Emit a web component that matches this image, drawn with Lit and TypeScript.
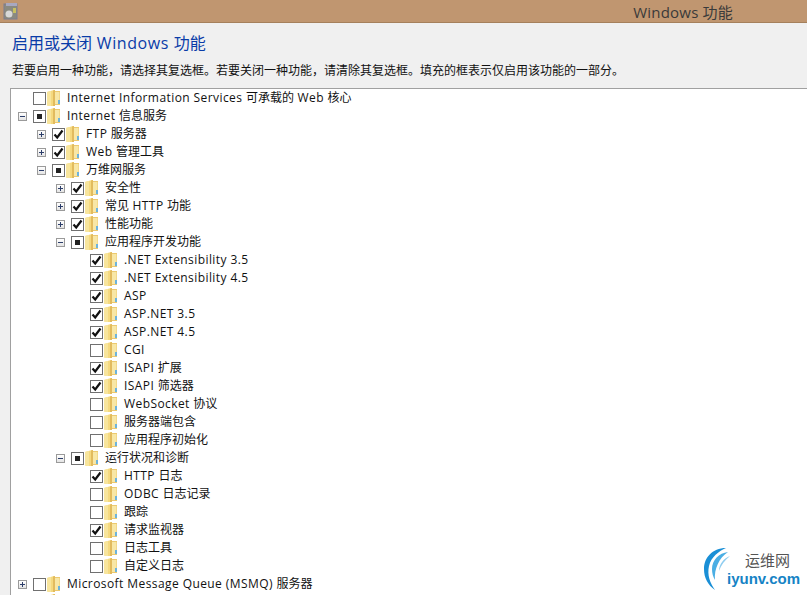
import { LitElement, html, css, svg } from "lit";
import { customElement } from "lit/decorators.js";

type Row = { l: number; t: string; c: "n" | "y" | "p"; e?: "+" | "-" };
const rows: Row[] = [
  { l: 0, t: "Internet Information Services 可承载的 Web 核心", c: "n" },
  { l: 0, t: "Internet 信息服务", c: "p", e: "-" },
  { l: 1, t: "FTP 服务器", c: "y", e: "+" },
  { l: 1, t: "Web 管理工具", c: "y", e: "+" },
  { l: 1, t: "万维网服务", c: "p", e: "-" },
  { l: 2, t: "安全性", c: "y", e: "+" },
  { l: 2, t: "常见 HTTP 功能", c: "y", e: "+" },
  { l: 2, t: "性能功能", c: "y", e: "+" },
  { l: 2, t: "应用程序开发功能", c: "p", e: "-" },
  { l: 3, t: ".NET Extensibility 3.5", c: "y" },
  { l: 3, t: ".NET Extensibility 4.5", c: "y" },
  { l: 3, t: "ASP", c: "y" },
  { l: 3, t: "ASP.NET 3.5", c: "y" },
  { l: 3, t: "ASP.NET 4.5", c: "y" },
  { l: 3, t: "CGI", c: "n" },
  { l: 3, t: "ISAPI 扩展", c: "y" },
  { l: 3, t: "ISAPI 筛选器", c: "y" },
  { l: 3, t: "WebSocket 协议", c: "n" },
  { l: 3, t: "服务器端包含", c: "n" },
  { l: 3, t: "应用程序初始化", c: "n" },
  { l: 2, t: "运行状况和诊断", c: "p", e: "-" },
  { l: 3, t: "HTTP 日志", c: "y" },
  { l: 3, t: "ODBC 日志记录", c: "n" },
  { l: 3, t: "跟踪", c: "n" },
  { l: 3, t: "请求监视器", c: "y" },
  { l: 3, t: "日志工具", c: "n" },
  { l: 3, t: "自定义日志", c: "n" },
  { l: 0, t: "Microsoft Message Queue (MSMQ) 服务器", c: "n", e: "+" },
  { l: 0, t: "", c: "n" },
];

const folder = svg`<svg class="folder" width="14" height="18" viewBox="0 0 14 18">
  <path d="M7 2 L13 2 L13 16 L7 16 Z" fill="#ecc96f"/>
  <path d="M8 3 L12.5 3 L12.5 15 L8 15 Z" fill="#f8e7a6"/>
  <path d="M0 3 L7 1 L8 1 L8 17 L1 17 L0 16 Z" fill="#f5d97f"/>
  <path d="M0 3 L4 2 L4 17 L1 17 L0 16 Z" fill="#f8e59c"/>
  <path d="M6 1.4 L8 1 L8 17 L6 17 Z" fill="#e2bb5e"/>
  <rect x="11" y="11" width="2" height="4" fill="#6db3dc"/>
</svg>`;

const spaced = (t: string) =>
  t.split(/([\x00-\x7f]+)/).map((s) =>
    /^[\x00-\x7f]+$/.test(s) ? html`<span class="lat">${s}</span>` : s
  );

@customElement("app-root")
export class AppRoot extends LitElement {
  static styles = css`
    :host {
      display: block;
      width: 807px;
      height: 595px;
      overflow: hidden;
      background: #f0f0f0;
      font-family: "Open Sans", "Noto Sans CJK SC", sans-serif;
      font-size: 12px;
      color: #111;
      position: relative;
    }
    .lat { letter-spacing: 0.42px; }
    .titlebar {
      height: 22px;
      background: #c09670;
      border-bottom: 1px solid #a5805c;
      display: flex;
      align-items: center;
      justify-content: space-between;
      padding: 0 74px 0 2px;
    }
    .titlebar span {
      font-size: 15px;
      color: #3a3a3a;
      letter-spacing: 0.2px;
    }
    .head1 {
      margin: 0;
      padding: 10px 0 0 12px;
      height: 29px;
      font-weight: 400;
      font-size: 16px;
      line-height: 20px;
      color: #0a3ca8;
    }
    .head1 .lat { letter-spacing: 0.6px; }
    .desc {
      padding: 0 0 0 12px;
      height: 26px;
      line-height: 18px;
      font-size: 12px;
      font-family: "Liberation Sans", "Noto Sans CJK SC", sans-serif;
      white-space: nowrap;
    }
    .tree {
      margin-left: 10px;
      height: 510px;
      background: #fff;
      border-top: 1px solid #a0a0a0;
      border-left: 1px solid #a0a0a0;
      overflow: hidden;
    }
    .row {
      height: 18px;
      display: flex;
      align-items: center;
      white-space: nowrap;
    }
    .exp {
      width: 9px;
      height: 9px;
      border: 1px solid #9a9a9a;
      box-sizing: border-box;
      flex: none;
      margin-right: 6px;
      background: linear-gradient(#fff, #e4e4e4);
    }
    .exp svg { display: block; }
    .noexp { width: 9px; margin-right: 6px; flex: none; }
    .box {
      width: 13px;
      height: 13px;
      border: 1px solid #707070;
      box-sizing: border-box;
      background: #fff;
      flex: none;
      display: flex;
      align-items: center;
      justify-content: center;
    }
    .dot { width: 5px; height: 5px; background: #222; }
    .folder { flex: none; margin: 0 6px 0 1px; }
    .txt { line-height: 18px; }
    .logo {
      position: absolute;
      left: 702px;
      top: 546px;
      width: 105px;
      height: 49px;
      background: #fff;
    }
    .logo svg { display: block; }
    .cn {
      position: absolute;
      left: 43px;
      top: 5px;
      font-size: 15px;
      line-height: 18px;
      color: #555;
      font-family: "Noto Sans CJK SC", sans-serif;
    }
    .en {
      position: absolute;
      left: 25px;
      top: 24px;
      font-size: 15px;
      line-height: 18px;
      font-weight: 700;
      color: #1583c5;
      font-family: "Liberation Sans", sans-serif;
    }
  `;

  private row(r: Row) {
    const pad = 7 + r.l * 19;
    const style = `padding-left:${pad}px`;
    return html`<div class="row" style=${style}>
      ${r.e
        ? html`<div class="exp">
            <svg width="7" height="7" viewBox="0 0 7 7">
              <path d=${r.e === "+" ? "M1 3.5H6M3.5 1V6" : "M1 3.5H6"} stroke="#2c3e6a" stroke-width="1" fill="none"/>
            </svg>
          </div>`
        : html`<div class="noexp"></div>`}
      <div class="box">
        ${r.c === "p" ? html`<div class="dot"></div>` : ""}
        ${r.c === "y"
          ? html`<svg width="11" height="11" viewBox="0 0 11 11"><path d="M1.5 5.5 L4.2 8.5 L9.5 1.5" stroke="#111" stroke-width="2.2" fill="none"/></svg>`
          : ""}
      </div>
      ${folder}
      <span class="txt">${spaced(r.t)}</span>
    </div>`;
  }

  render() {
    return html`
      <div class="titlebar">
        <svg width="18" height="20" viewBox="0 0 18 20">
          <rect x="2" y="3" width="13" height="15" fill="#8a8a80" stroke="#7c7c90"/>
          <rect x="4" y="2" width="11" height="3" fill="#a8a8c0"/>
          <circle cx="7" cy="13" r="3.5" fill="#d8d8d8"/>
          <rect x="11" y="7" width="3" height="5" fill="#c8c060"/>
        </svg>
        <span>Windows 功能</span>
      </div>
      <h1 class="head1">${spaced("启用或关闭 Windows 功能")}</h1>
      <div class="desc">若要启用一种功能，请选择其复选框。若要关闭一种功能，请清除其复选框。填充的框表示仅启用该功能的一部分。</div>
      <div class="tree">${rows.map((r) => this.row(r))}</div>
      <div class="logo">
        <svg width="42" height="46" viewBox="0 0 42 46">
          <path d="M24 2 C10 2 2 12 2 23 C2 32 6 39 13 44 C8 37 5 29 7 20 C9 11 17 5 24 2Z" fill="#1a8fd6"/>
          <path d="M26 6 C17 7 10 14 10 23 C10 27 11 31 13 34 C12 23 17 12 26 6Z" fill="#4aaee4"/>
          <path d="M28 10 C22 12 17 18 17 25 C19 19 23 14 28 10Z" fill="#8fcdf0"/>
        </svg>
        <div class="cn">运维网</div>
        <div class="en">iyunv.com</div>
      </div>
    `;
  }
}
